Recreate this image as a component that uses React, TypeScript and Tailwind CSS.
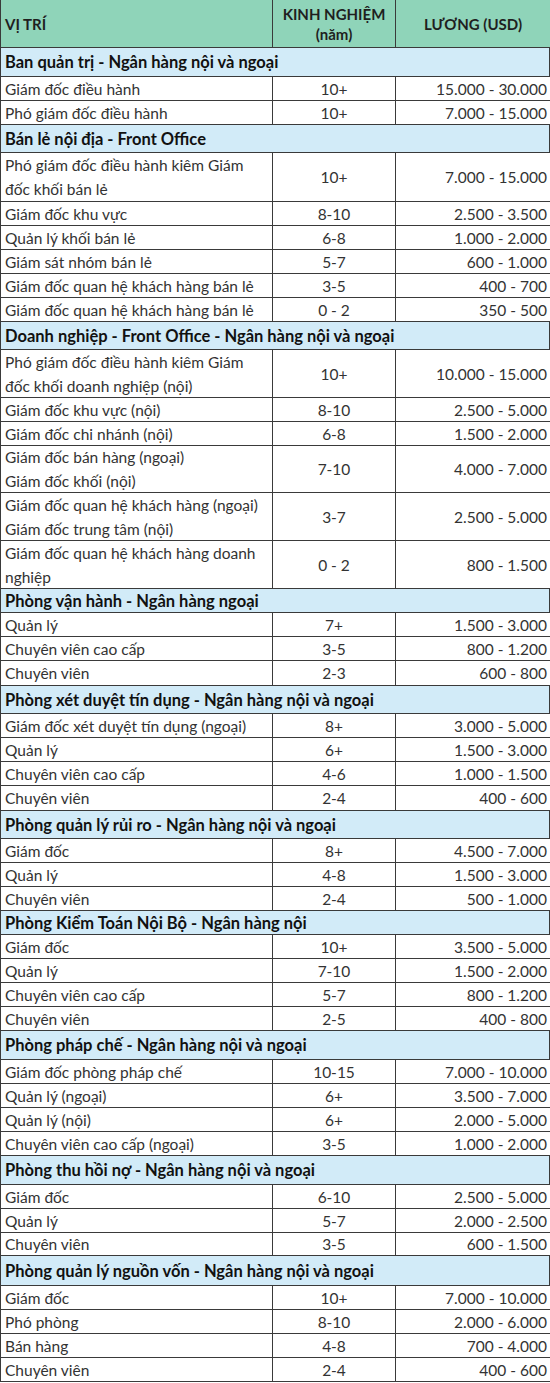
import React from "react";

type Row =
  | { t: "s"; name: string; h: string }
  | { t: "r"; name: React.ReactNode; exp: string; pay: string; h: string };

const S = (name: string, h: string): Row => ({ t: "s", name, h });
const R = (name: React.ReactNode, exp: string, pay: string, h = "h-[24px]"): Row => ({ t: "r", name, exp, pay, h });

const rows: Row[] = [
  S("Ban quản trị - Ngân hàng nội và ngoại", "h-[29px]"),
  R("Giám đốc điều hành", "10+", "15.000 - 30.000"),
  R("Phó giám đốc điều hành", "10+", "7.000 - 15.000"),
  S("Bán lẻ nội địa - Front Office", "h-[28px]"),
  R(<>Phó giám đốc điều hành kiêm Giám<br />đốc khối bán lẻ</>, "10+", "7.000 - 15.000", "h-[49px]"),
  R("Giám đốc khu vực", "8-10", "2.500 - 3.500"),
  R("Quản lý khối bán lẻ", "6-8", "1.000 - 2.000"),
  R("Giám sát nhóm bán lẻ", "5-7", "600 - 1.000"),
  R("Giám đốc quan hệ khách hàng bán lẻ", "3-5", "400 - 700"),
  R("Giám đốc quan hệ khách hàng bán lẻ", "0 - 2", "350 - 500"),
  S("Doanh nghiệp - Front Office - Ngân hàng nội và ngoại", "h-[28px]"),
  R(<>Phó giám đốc điều hành kiêm Giám<br />đốc khối doanh nghiệp (nội)</>, "10+", "10.000 - 15.000", "h-[48px]"),
  R("Giám đốc khu vực (nội)", "8-10", "2.500 - 5.000"),
  R("Giám đốc chi nhánh (nội)", "6-8", "1.500 - 2.000"),
  R(<>Giám đốc bán hàng (ngoại)<br />Giám đốc khối (nội)</>, "7-10", "4.000 - 7.000", "h-[47px]"),
  R(<>Giám đốc quan hệ khách hàng (ngoại)<br />Giám đốc trung tâm (nội)</>, "3-7", "2.500 - 5.000", "h-[48px]"),
  R(<>Giám đốc quan hệ khách hàng doanh<br />nghiệp</>, "0 - 2", "800 - 1.500", "h-[48px]"),
  S("Phòng vận hành - Ngân hàng ngoại", "h-[24px]"),
  R("Quản lý", "7+", "1.500 - 3.000"),
  R("Chuyên viên cao cấp", "3-5", "800 - 1.200"),
  R("Chuyên viên", "2-3", "600 - 800", "h-[25px]"),
  S("Phòng xét duyệt tín dụng - Ngân hàng nội và ngoại", "h-[28px]"),
  R("Giám đốc xét duyệt tín dụng (ngoại)", "8+", "3.000 - 5.000"),
  R("Quản lý", "6+", "1.500 - 3.000"),
  R("Chuyên viên cao cấp", "4-6", "1.000 - 1.500"),
  R("Chuyên viên", "2-4", "400 - 600", "h-[25px]"),
  S("Phòng quản lý rủi ro - Ngân hàng nội và ngoại", "h-[28px]"),
  R("Giám đốc", "8+", "4.500 - 7.000"),
  R("Quản lý", "4-8", "1.500 - 3.000"),
  R("Chuyên viên", "2-4", "500 - 1.000"),
  S("Phòng Kiểm Toán Nội Bộ - Ngân hàng nội", "h-[24px]"),
  R("Giám đốc", "10+", "3.500 - 5.000"),
  R("Quản lý", "7-10", "1.500 - 2.000"),
  R("Chuyên viên cao cấp", "5-7", "800 - 1.200"),
  R("Chuyên viên", "2-5", "400 - 800"),
  S("Phòng pháp chế - Ngân hàng nội và ngoại", "h-[29px]"),
  R("Giám đốc phòng pháp chế", "10-15", "7.000 - 10.000"),
  R("Quản lý (ngoại)", "6+", "3.500 - 7.000"),
  R("Quản lý (nội)", "6+", "2.000 - 5.000"),
  R("Chuyên viên cao cấp (ngoại)", "3-5", "1.000 - 2.000"),
  S("Phòng thu hồi nợ - Ngân hàng nội và ngoại", "h-[29px]"),
  R("Giám đốc", "6-10", "2.500 - 5.000"),
  R("Quản lý", "5-7", "2.000 - 2.500"),
  R("Chuyên viên", "3-5", "600 - 1.500", "h-[23px]"),
  S("Phòng quản lý nguồn vốn - Ngân hàng nội và ngoại", "h-[30px]"),
  R("Giám đốc", "10+", "7.000 - 10.000"),
  R("Phó phòng", "8-10", "2.000 - 6.000"),
  R("Bán hàng", "4-8", "700 - 4.000"),
  R("Chuyên viên", "2-4", "400 - 600"),
];

const cols = "grid grid-cols-[272px_123px_155px]";

export default function App() {
  return (
    <div
      className="w-[550px] bg-white text-[15.5px] leading-[20px] text-[#333]"
      style={{ fontFamily: "Lato, 'Open Sans', sans-serif" }}
    >
      <div className={cols + " h-[48px] bg-[#8fd4b9] text-[#1f1f1f] font-bold text-[15px] border-b border-l border-[#3a3a3a]"}>
        <div className="flex items-center pl-[4px] border-r border-[#3a3a3a]">VỊ TRÍ</div>
        <div className="flex items-center justify-center text-center border-r border-[#3a3a3a]">
          KINH NGHIỆM<br />(năm)
        </div>
        <div className="flex items-center justify-center border-r border-[#3a3a3a]">LƯƠNG (USD)</div>
      </div>
      {rows.map((r, i) =>
        r.t === "s" ? (
          <div
            key={i}
            className={r.h + " flex items-center bg-[#d2ebf8] border-b border-l border-r border-[#3a3a3a] pl-[4px] font-bold text-[#111] text-[16.5px]"}
          >
            {r.name}
          </div>
        ) : (
          <div key={i} className={cols + " " + r.h + " border-b border-l border-[#3a3a3a]"}>
            <div className="flex items-center pl-[4px] border-r border-[#3a3a3a] whitespace-nowrap overflow-hidden leading-[24px]">
              <span>{r.name}</span>
            </div>
            <div className="flex items-center justify-center border-r border-[#3a3a3a]">{r.exp}</div>
            <div className="flex items-center justify-end pr-[3px] border-r border-[#3a3a3a]">{r.pay}</div>
          </div>
        )
      )}
    </div>
  );
}
